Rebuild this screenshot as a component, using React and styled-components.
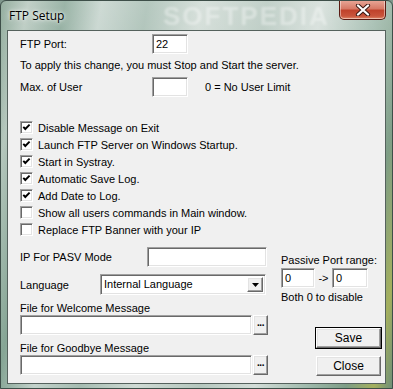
import React from "react";
import styled, { createGlobalStyle } from "styled-components";

const Global = createGlobalStyle`
  html, body { margin: 0; padding: 0; }
  body { width: 393px; height: 389px; overflow: hidden; background: #7f978c; }
  * { box-sizing: border-box; }
`;

const Win = styled.div`
  position: relative;
  width: 393px;
  height: 389px;
  display: flex;
  flex-direction: column;
  border: 1px solid #3e4f49;
  border-radius: 6px 6px 0 0;
  overflow: hidden;
  background:
    linear-gradient(180deg, rgba(255,255,255,0.18) 0%, rgba(255,255,255,0) 40%),
    linear-gradient(100deg, #7f9e8c 0%, #b4c6bc 6%, #86a595 14%, #c3d2cb 22%, #a5bcb1 32%, #cfdad4 44%, #b5c7be 58%, #d3ddd8 70%, #9db8aa 82%, #7d9d86 90%, #a4b05e 96%, #6f8f78 100%);
`;

const Watermark = styled.div`
  position: absolute;
  left: 162px;
  top: 0;
  font-family: "Liberation Sans", Arial, sans-serif;
  font-weight: bold;
  font-size: 26px;
  letter-spacing: 2px;
  color: rgba(255, 255, 255, 0.35);
  filter: blur(1.2px);
  pointer-events: none;
`;

const TitleBar = styled.div`
  height: 29px;
  display: flex;
  align-items: flex-start;
  justify-content: space-between;
  padding-left: 8px;
`;

const Title = styled.div`
  margin-top: 7px;
  font-family: "Open Sans", "Noto Sans", sans-serif;
  font-size: 12px;
  line-height: 16px;
  color: #000;
  text-shadow: 0 0 6px rgba(255,255,255,0.9), 0 0 3px rgba(255,255,255,0.9);
`;

const CloseBtn = styled.div`
  position: relative;
  width: 47px;
  height: 20px;
  margin-top: -1px;
  margin-right: 6px;
  border: 1px solid #5a1a12;
  border-top: none;
  border-radius: 0 0 5px 5px;
  background: linear-gradient(180deg, #e9a99a 0%, #d77a67 45%, #c0432c 55%, #c9553c 85%, #e08a6a 100%);
  box-shadow: inset 0 0 0 1px rgba(255,255,255,0.45);
  display: flex;
  align-items: center;
  justify-content: center;
`;

const Client = styled.div`
  flex: 1;
  margin: 0 6px 4px 6px;
  border: 1px solid #55625d;
  background: #f0f0f0;
  padding: 3px 4px 0 12px;
  display: flex;
  flex-direction: column;
  font-family: "Liberation Sans", Arial, sans-serif;
  font-size: 11px;
  color: #000;
`;

const Row = styled.div`
  display: flex;
  align-items: center;
  height: ${(p) => p.$h || 20}px;
  margin-top: ${(p) => p.$mt || 0}px;
`;

const Label = styled.div`
  width: ${(p) => p.$w}px;
  margin-left: ${(p) => p.$ml || 0}px;
  flex: none;
  white-space: nowrap;
`;

const Line = styled.div`
  line-height: 14px;
  margin-top: ${(p) => p.$mt || 0}px;
  white-space: nowrap;
`;

const Sunken = styled.div`
  width: ${(p) => p.$w}px;
  height: ${(p) => p.$h || 20}px;
  flex: none;
  background: #fff;
  border-style: solid;
  border-width: 1px;
  border-color: #a0a0a0 #ffffff #ffffff #a0a0a0;
  box-shadow: inset 1px 1px 0 #696969, inset -1px -1px 0 #e3e3e3;
  padding: 2px ${(p) => p.$pr || 0}px 0 3px;
  line-height: 14px;
  white-space: nowrap;
  display: flex;
  align-items: flex-start;
  justify-content: space-between;
`;

const Raised = styled.div`
  width: ${(p) => p.$w}px;
  height: ${(p) => p.$h || 20}px;
  flex: none;
  background: #f0f0f0;
  border-style: solid;
  border-width: 1px;
  border-color: #ffffff #696969 #696969 #ffffff;
  box-shadow: inset -1px -1px 0 #a0a0a0, inset 1px 1px 0 #e3e3e3;
  display: flex;
  align-items: center;
  justify-content: center;
  line-height: 14px;
`;

const PushButton = styled(Raised)`
  align-self: flex-end;
  margin-top: ${(p) => p.$mt}px;
  font-size: 12px;
  outline: ${(p) => (p.$default ? "1px solid #000" : "none")};
  outline-offset: 0;
`;

const CheckList = styled.div`
  margin-top: 22px;
  display: flex;
  flex-direction: column;
`;

const CheckRow = styled.div`
  height: 17px;
  display: flex;
  align-items: center;
  gap: 5px;
  white-space: nowrap;
`;

const Box = styled.div`
  width: 13px;
  height: 13px;
  flex: none;
  background: #fff;
  border-style: solid;
  border-width: 1px;
  border-color: #a0a0a0 #ffffff #ffffff #a0a0a0;
  box-shadow: inset 1px 1px 0 #696969, inset -1px -1px 0 #e3e3e3;
  display: flex;
  align-items: center;
  justify-content: center;
`;

const Lower = styled.div`
  display: flex;
  margin-top: 9px;
`;

const LeftCol = styled.div`
  width: 248px;
  display: flex;
  flex-direction: column;
`;

const RightCol = styled.div`
  width: 100px;
  margin-left: 13px;
  padding-top: 6px;
  display: flex;
  flex-direction: column;
`;

const Arrow = styled.span`
  width: 17px;
  text-align: center;
  font-size: 11px;
`;

const Dots = styled.span`
  font-weight: bold;
  font-size: 10px;
  letter-spacing: -0.5px;
  margin-top: -4px;
`;

const FileRow = styled.div`
  display: flex;
  gap: 1px;
`;

const items = [
  ["Disable Message on Exit", true],
  ["Launch FTP Server on Windows Startup.", true],
  ["Start in Systray.", true],
  ["Automatic Save Log.", true],
  ["Add Date to Log.", true],
  ["Show all users commands in Main window.", false],
  ["Replace FTP Banner with your IP", false],
];

const Check = () => (
  <svg width="9" height="9" viewBox="0 0 9 9">
    <polyline points="1.3,3.8 3.3,6 7.6,1.6" fill="none" stroke="#000" strokeWidth="1.9" />
  </svg>
);

export default function App() {
  return (
    <>
      <Global />
      <Win>
        <Watermark>SOFTPEDIA</Watermark>
        <TitleBar>
          <Title>FTP Setup</Title>
          <CloseBtn>
            <svg width="16" height="12" viewBox="0 0 16 12">
              <path d="M3 1.5 L13 10.5 M13 1.5 L3 10.5" stroke="#3b1a14" strokeWidth="4.2" strokeLinecap="round" />
              <path d="M3 1.5 L13 10.5 M13 1.5 L3 10.5" stroke="#ffffff" strokeWidth="2.3" strokeLinecap="round" />
            </svg>
          </CloseBtn>
        </TitleBar>
        <Client>
          <Row>
            <Label $w={132}>FTP Port:</Label>
            <Sunken $w={36}>22</Sunken>
          </Row>
          <Line $mt={4}>To apply this change, you must Stop and Start the server.</Line>
          <Row $mt={5}>
            <Label $w={132}>Max. of User</Label>
            <Sunken $w={36} />
            <Label $w={120} $ml={17}>0 = No User Limit</Label>
          </Row>
          <CheckList>
            {items.map(([t, c]) => (
              <CheckRow key={t}>
                <Box>{c && <Check />}</Box>
                {t}
              </CheckRow>
            ))}
          </CheckList>
          <Lower>
            <LeftCol>
              <Row>
                <Label $w={127}>IP For PASV Mode</Label>
                <Sunken $w={120} />
              </Row>
              <Row $mt={7} $h={21}>
                <Label $w={80}>Language</Label>
                <Sunken $w={166} $h={21} $pr={2}>
                  <span>Internal Language</span>
                  <Raised $w={16} $h={15}>
                    <svg width="7" height="4" viewBox="0 0 7 4"><path d="M0 0 H7 L3.5 4 Z" fill="#000" /></svg>
                  </Raised>
                </Sunken>
              </Row>
              <Line $mt={6}>File for Welcome Message</Line>
              <FileRow>
                <Sunken $w={232} />
                <Raised $w={15}><Dots>...</Dots></Raised>
              </FileRow>
              <Line $mt={6}>File for Goodbye Message</Line>
              <FileRow>
                <Sunken $w={232} />
                <Raised $w={15}><Dots>...</Dots></Raised>
              </FileRow>
            </LeftCol>
            <RightCol>
              <Line>Passive Port range:</Line>
              <Row $mt={1}>
                <Sunken $w={34}>0</Sunken>
                <Arrow>-&gt;</Arrow>
                <Sunken $w={36}>0</Sunken>
              </Row>
              <Line $mt={2}>Both 0 to disable</Line>
              <PushButton $w={65} $mt={24} $default>Save</PushButton>
              <PushButton $w={65} $mt={8}>Close</PushButton>
            </RightCol>
          </Lower>
        </Client>
      </Win>
    </>
  );
}
